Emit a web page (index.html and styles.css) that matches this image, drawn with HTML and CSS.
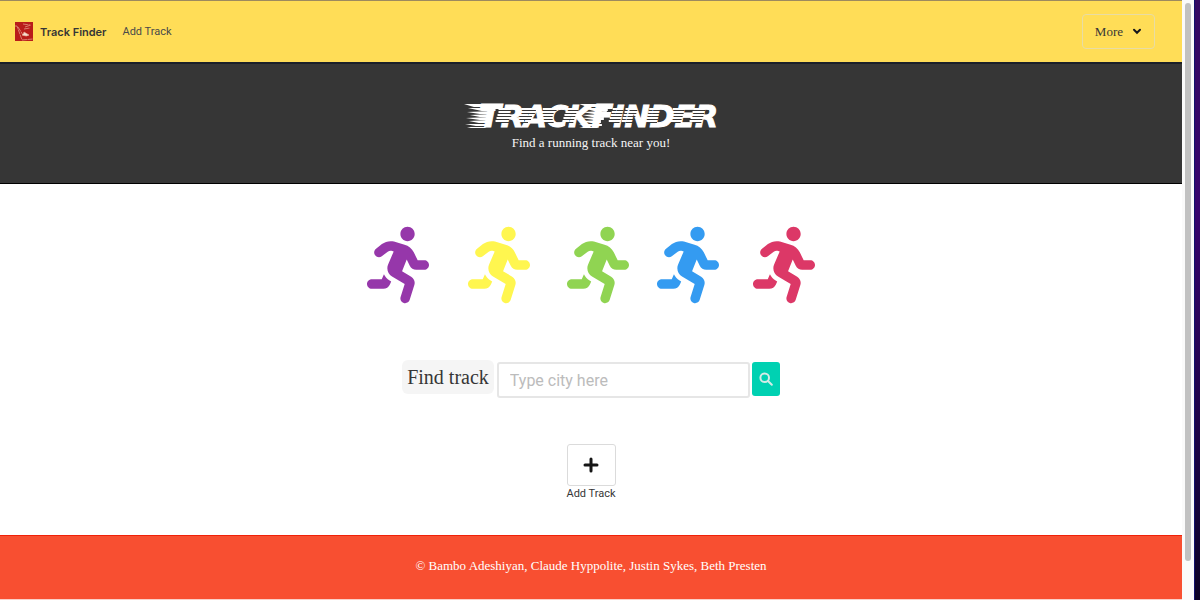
FILE: index.html
```html
<!DOCTYPE html>
<html lang="en">
<head>
<meta charset="utf-8">
<meta name="viewport" content="width=device-width, initial-scale=1">
<title>Track Finder</title>
<link rel="stylesheet" href="styles.css">
</head>
<body>
<svg width="0" height="0" class="defs" aria-hidden="true">
  <symbol id="runner" viewBox="0 0 416 512"><path d="M272 96c26.51 0 48-21.49 48-48S298.51 0 272 0s-48 21.49-48 48 21.49 48 48 48zM113.69 317.47l-14.8 34.52H32c-17.67 0-32 14.33-32 32s14.33 32 32 32h77.45c19.25 0 36.58-11.44 44.11-29.09l8.79-20.52-10.67-6.3c-17.32-10.23-30.06-25.37-37.99-42.61zM384 223.99h-44.03l-26.06-53.25c-12.5-25.55-35.45-44.23-61.78-50.94l-71.08-21.14c-28.3-6.8-57.77-.55-80.84 17.14l-39.67 30.41c-14.03 10.75-16.69 30.83-5.94 44.86s30.84 16.69 44.86 5.94l39.67-30.41c7.67-5.89 17.44-8 25.27-6.14l14.7 4.37-37.46 87.39c-12.62 29.48-1.31 64.01 26.3 80.31l84.98 50.17-27.47 87.73c-5.28 16.86 4.11 34.82 20.97 40.09 3.19 1 6.41 1.48 9.58 1.48 13.61 0 26.23-8.77 30.52-22.45l31.64-101.06c5.91-20.77-2.89-43.08-21.64-54.39l-61.24-36.14 31.31-78.28 20.27 41.43c8 16.34 24.92 26.89 43.11 26.89H384c17.67 0 32-14.33 32-32s-14.33-31.99-32-31.99z"/></symbol>
</svg>
<div class="window">
  <div class="page">
    <nav class="navbar">
      <a class="brand" href="#">
        <svg class="brand-logo" viewBox="0 0 18 19" aria-hidden="true">
          <rect width="18" height="19" fill="#b91d1a"/>
          <g fill="none" stroke="#e8a890" stroke-width=".7"><path d="M0 4h2l5 14 11-1M3 5l5 8M8 2l7 1M10 5l6-2M9 7l6-1" stroke-dasharray="5 .6"/><path d="M7 13q2-1 2-3l5 3q-2 2-7 0" fill="#f4dfd2"/></g>
        </svg>
        <span>Track Finder</span>
      </a>
      <a class="nav-link" href="#add">Add Track</a>
      <button class="more" type="button">More
        <svg viewBox="0 0 10 7" aria-hidden="true"><path d="M2 1.800L5 4.800l3-3" fill="none" stroke="#16161c" stroke-width="2" stroke-linecap="round"/></svg>
      </button>
    </nav>
    <header class="hero">
      <h1 class="wordmark"><span class="initial">T</span>RACK<span class="initial">F</span>INDER
        <svg class="streaks" viewBox="0 0 258 24" preserveAspectRatio="none" aria-hidden="true">
          <defs>
            <g id="hatch">
              <path d="M39 6.500h10M39 9.500h9M38 12.500h10M37 15.500h9M36 18.500h10M62 6.500h11M61 9.500h11M60 12.500h9M59 15.500h9M58 18.500h7"/>
              <path d="M84 6.500h10M83 9.500h8M82 12.500h8M82 15.500h8M82 18.500h9M108 6.500h8M107 9.500h7M106 12.500h7M105 15.500h7M104 18.500h7"/>
              <path d="M155 6.500h7M154 9.500h7M153 12.500h7M152 15.500h7M151 18.500h7M168 6.500h8M167 9.500h8M166 12.500h8M165 15.500h8M164 18.500h8"/>
              <path d="M192 6.500h8M191 9.500h8M190 12.500h8M189 15.500h8M188 18.500h8M216 6.500h8M215 9.500h8M214 12.500h8M213 15.500h8M212 18.500h8M237 6.500h8M236 9.500h8M235 12.500h8M234 15.500h8M233 18.500h8"/>
            </g>
          </defs>
          <g fill="#fff">
            <path d="M0 0h34v3h-24zM4 4l28 0v3h-14zM3 8l26-1v3h-13zM6 11l22-1v3h-12zM2 14l24-1v3h-10zM5 17l20-1v3h-10zM1 20h24v2h-13zM3 23h20l-2 1h-14z"/>
            <path d="M117 0h32v3h-24zM120 4h26v3h-14zM119 8l26-1v3h-13zM120 11l22-1v3h-12zM118 14l24-1v3h-10zM119 17l20-1v3h-10zM116 20h24v2h-13zM117 23h20l-2 1h-14z"/>
          </g>
          <use href="#hatch" transform="translate(-4 -1.500)" stroke="#fff" stroke-width="2"/>
          <use href="#hatch" stroke="#363636" stroke-width="1"/>
        </svg>
      </h1>
      <p class="tagline">Find a running track near you!</p>
    </header>
    <main class="main">
      <div class="runners" aria-hidden="true">
        <svg class="runner purple"><use href="#runner"/></svg>
        <svg class="runner yellow"><use href="#runner"/></svg>
        <svg class="runner green"><use href="#runner"/></svg>
        <svg class="runner blue"><use href="#runner"/></svg>
        <svg class="runner red"><use href="#runner"/></svg>
      </div>
      <form class="search">
        <label class="search-label" for="city">Find track</label>
        <input class="search-input" id="city" type="text" placeholder="Type city here">
        <button class="search-button" type="button" aria-label="Search">
          <svg viewBox="0 0 14 14" aria-hidden="true"><circle cx="5.700" cy="5.700" r="4.300"/><path d="M9 9l3.800 3.800"/></svg>
        </button>
      </form>
      <div class="add">
        <button class="add-button" id="add" type="button" aria-labelledby="add-label">
          <svg viewBox="0 0 16 16" aria-hidden="true"><path d="M8 2v12M2 8h12"/></svg>
        </button>
        <label id="add-label" for="add">Add Track</label>
      </div>
    </main>
    <footer class="footer">© Bambo Adeshiyan, Claude Hyppolite, Justin Sykes, Beth Presten</footer>
  </div>
  <div class="scrollbar" aria-hidden="true"><div class="thumb"></div></div>
  <div class="backdrop" aria-hidden="true"></div>
</div>
</body>
</html>
```
FILE: styles.css
```css
* { box-sizing: border-box; }
body { margin: 0; background: #fff; color: #363636; font-family: Inter, "Liberation Sans", sans-serif; }
.defs { position: absolute; }
.window { display: grid; grid-template-columns: 1fr 12px 6px; min-height: 100vh; }
.page { display: flex; flex-direction: column; border-top: 1px solid #9d8a5e; border-bottom: 1px solid #fbd0c8; }
.navbar { display: flex; align-items: center; gap: 16px; padding: 13px 27px 13px 15px; background: #ffdd57; border-bottom: 2px solid #1b2029; font-size: 11px; }
.brand { display: flex; align-items: center; gap: 7px; color: #363636; font-weight: 600; text-decoration: none; }
.brand-logo { width: 18px; height: 19px; }
.nav-link { color: #4a4a4a; font-family: Roboto, sans-serif; text-decoration: none; }
.more { display: flex; align-items: center; gap: 9px; height: 35px; margin-left: auto; padding: 0 12px; border: 1px solid #e8dca4; border-radius: 4px; background: transparent; color: #363636; font: 13px "Liberation Serif", serif; }
.more svg { width: 10px; height: 7px; }
.hero { display: flex; flex-direction: column; align-items: center; padding: 37px 0 31px; background: #363636; border-bottom: 1px solid #000; color: #f5f5f5; }
.wordmark { position: relative; margin: 0; padding-left: 15px; color: #fff; font: italic bold 30px/30px "DejaVu Sans", sans-serif; -webkit-text-stroke: 1px #fff; }
.initial { font-size: 32px; }
.streaks { position: absolute; left: 0; top: 3px; width: 100%; height: 24px; }
.tagline { margin: 2px 0 0; font: 13px/18px "Liberation Serif", serif; }
.main { display: flex; flex: 1; flex-direction: column; align-items: center; padding: 42px 0 32px; }
.runners { display: grid; grid-template-columns: 101px 99px 90px 96px 62px; }
.runner { width: 62px; height: 78px; }
.purple { fill: #9637aa; }
.yellow { fill: #fff64f; }
.green { fill: #90d452; }
.blue { fill: #349bf1; }
.red { fill: #dc3867; }
.search { display: flex; align-items: flex-start; gap: 2px; margin-top: 56px; }
.search-label { margin-right: 1px; padding: 0 5px; border-radius: 6px; background: #f5f5f5; font: 20px/34px "Liberation Serif", serif; }
.search-input { width: 253px; height: 36px; margin-top: 2px; padding: 0 11px; border: 2px solid #e6e6e6; border-radius: 3px; background: #fff; color: #363636; font: 16px Roboto, sans-serif; }
.search-input::placeholder { color: #bcbcbc; opacity: 1; }
.search-button { display: grid; place-items: center; width: 28px; height: 34px; margin-top: 2px; padding: 0; border: 0; border-radius: 3px; background: #00d1b2; }
.search-button svg { width: 14px; height: 14px; fill: none; stroke: #d4ebe6; stroke-width: 2; stroke-linecap: round; }
.add { display: flex; flex-direction: column; align-items: center; margin-top: 46px; font: 11px/16px Roboto, sans-serif; }
.add-button { display: grid; place-items: center; width: 49px; height: 42px; padding: 0; border: 1px solid #dbdbdb; border-radius: 3px; background: #fff; }
.add-button svg { width: 16px; height: 16px; fill: none; stroke: #151515; stroke-width: 3; stroke-linecap: round; }
.footer { padding: 21px 0 24px; border-top: 1px solid #f02008; background: #f84f31; color: #fff; font: 13px/18px "Liberation Serif", serif; text-align: center; }
.scrollbar { padding: 3px 3px 0 3px; background: #fafafa; }
.thumb { height: 558px; border-radius: 3px; background: #c1c1c1; }
.backdrop { border-left: 1px solid #10106c; background: linear-gradient(#340a62, #38056e 35%, #180440 80%, #0b0226); }
```
